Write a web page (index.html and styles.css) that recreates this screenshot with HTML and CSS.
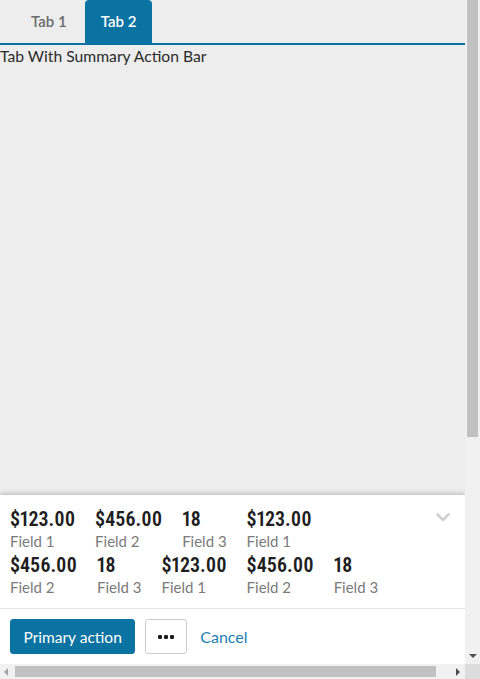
FILE: index.html
```html
<!DOCTYPE html>
<html lang="en">
<head>
<meta charset="utf-8">
<title>Tab With Summary Action Bar</title>
<link rel="stylesheet" href="styles.css">
</head>
<body>
<div class="app">
  <div class="page">
    <div class="tabs">
      <div class="tab">Tab 1</div>
      <div class="tab tab-active">Tab 2</div>
    </div>
    <div class="content">Tab With Summary Action Bar</div>
    <div class="summary">
      <div class="summary-top">
        <div class="fields">
          <div class="field"><div class="value">$123.00</div><div class="label">Field 1</div></div>
          <div class="field"><div class="value">$456.00</div><div class="label">Field 2</div></div>
          <div class="field"><div class="value">18</div><div class="label">Field 3</div></div>
          <div class="field"><div class="value">$123.00</div><div class="label">Field 1</div></div>
          <div class="field"><div class="value">$456.00</div><div class="label">Field 2</div></div>
          <div class="field"><div class="value">18</div><div class="label">Field 3</div></div>
          <div class="field"><div class="value">$123.00</div><div class="label">Field 1</div></div>
          <div class="field"><div class="value">$456.00</div><div class="label">Field 2</div></div>
          <div class="field"><div class="value">18</div><div class="label">Field 3</div></div>
        </div>
        <div class="toggle">
          <svg width="14" height="9" viewBox="0 0 14 9"><path d="M1.5 1.5 L7 7 L12.5 1.5" fill="none" stroke="#cfcfcf" stroke-width="2.6" stroke-linecap="square"/></svg>
        </div>
      </div>
      <div class="actions">
        <button class="btn btn-primary">Primary action</button>
        <button class="btn btn-more"><svg width="16" height="4" viewBox="0 0 16 4"><rect x="0" y="0" width="4" height="4" rx="1.3" fill="#1a1a1a"/><rect x="6" y="0" width="4" height="4" rx="1.3" fill="#1a1a1a"/><rect x="12" y="0" width="4" height="4" rx="1.3" fill="#1a1a1a"/></svg></button>
        <a class="cancel">Cancel</a>
      </div>
    </div>
  </div>
  <div class="vscroll">
    <div class="vthumb"></div>
    <div class="vspace"></div>
    <div class="arrow-down"></div>
  </div>
  <div class="hscroll">
    <div class="arrow-left"></div>
    <div class="hthumb"></div>
    <div class="hspace"></div>
    <div class="arrow-right"></div>
  </div>
  <div class="corner"></div>
</div>
</body>
</html>
```

FILE: styles.css
```css
* { box-sizing: border-box; }
html, body { margin: 0; padding: 0; }
body {
  width: 480px;
  height: 679px;
  overflow: hidden;
  font-family: Lato, "Open Sans", sans-serif;
  color: #2b2b2b;
  background: #ededed;
}
.app {
  display: grid;
  grid-template-columns: 465px 15px;
  grid-template-rows: 664px 15px;
  width: 480px;
  height: 679px;
}
.page {
  display: flex;
  flex-direction: column;
  background: #ededed;
  min-height: 0;
}
.tabs {
  display: flex;
  gap: 2px;
  padding-left: 15px;
  height: 45px;
  border-bottom: 2px solid #0b73a1;
}
.tab {
  padding: 0 16px;
  height: 43px;
  line-height: 43px;
  font-size: 15px;
  font-weight: 600;
  color: #6b6b6b;
  border-radius: 4px 4px 0 0;
}
.tab-active {
  background: #0b73a1;
  color: #fff;
}
.content {
  flex: 1;
  font-size: 15.7px;
  line-height: 20px;
  padding-top: 1px;
  color: #2b2b2b;
}
.summary {
  background: #fff;
  box-shadow: 0 -2px 4px rgba(0,0,0,0.18);
}
.summary-top {
  display: flex;
  align-items: flex-start;
  padding: 11px 15px 10px 10px;
  border-bottom: 1px solid #e3e3e3;
}
.fields {
  flex: 1;
  display: flex;
  flex-wrap: wrap;
  column-gap: 20px;
}
.field {
  display: flex;
  flex-direction: column;
  height: 46px;
}
.value {
  font-family: "Roboto Condensed", Roboto, sans-serif;
  font-stretch: 75%;
  font-variant-numeric: proportional-nums;
  font-size: 20px;
  line-height: 26px;
  font-weight: 600;
  color: #1e1e1e;
}
.label {
  font-size: 15px;
  line-height: 19px;
  color: #7a7a7a;
}
.toggle {
  width: 14px;
  margin-left: 46px;
  padding-top: 7px;
  display: flex;
}
.actions {
  display: flex;
  align-items: center;
  gap: 10px;
  padding: 10px 10px 10px 10px;
}
.btn {
  height: 35px;
  border-radius: 3px;
  font-family: Lato, sans-serif;
  font-size: 15.5px;
  padding: 0 12.5px;
  cursor: pointer;
}
.btn-primary {
  background: #0b73a1;
  border: 1px solid #0b73a1;
  color: #fff;
}
.btn-more {
  width: 42px;
  background: #fff;
  border: 1px solid #cccccc;
  padding: 0;
  display: flex;
  align-items: center;
  justify-content: center;
}
.cancel {
  margin-left: 3px;
  font-size: 16px;
  color: #1a7fb3;
}
.vscroll {
  background: #f1f1f1;
  display: flex;
  flex-direction: column;
  align-items: center;
}
.vthumb {
  width: 11px;
  height: 437px;
  background: #c1c1c1;
}
.vspace { flex: 1; }
.arrow-down {
  width: 0;
  height: 0;
  border-left: 4px solid transparent;
  border-right: 4px solid transparent;
  border-top: 4px solid #505050;
  margin-bottom: 6px;
}
.hscroll {
  background: #f1f1f1;
  display: flex;
  align-items: center;
}
.arrow-left {
  width: 0;
  height: 0;
  margin: 0 6px 0 4px;
  border-top: 4px solid transparent;
  border-bottom: 4px solid transparent;
  border-right: 4px solid #a3a3a3;
}
.hthumb {
  width: 421px;
  height: 11px;
  background: #c1c1c1;
  margin-left: 1px;
}
.hspace { flex: 1; }
.arrow-right {
  width: 0;
  height: 0;
  margin: 0 5px 0 6px;
  border-top: 4px solid transparent;
  border-bottom: 4px solid transparent;
  border-left: 4px solid #505050;
}
.corner { background: #dcdcdc; }
```
